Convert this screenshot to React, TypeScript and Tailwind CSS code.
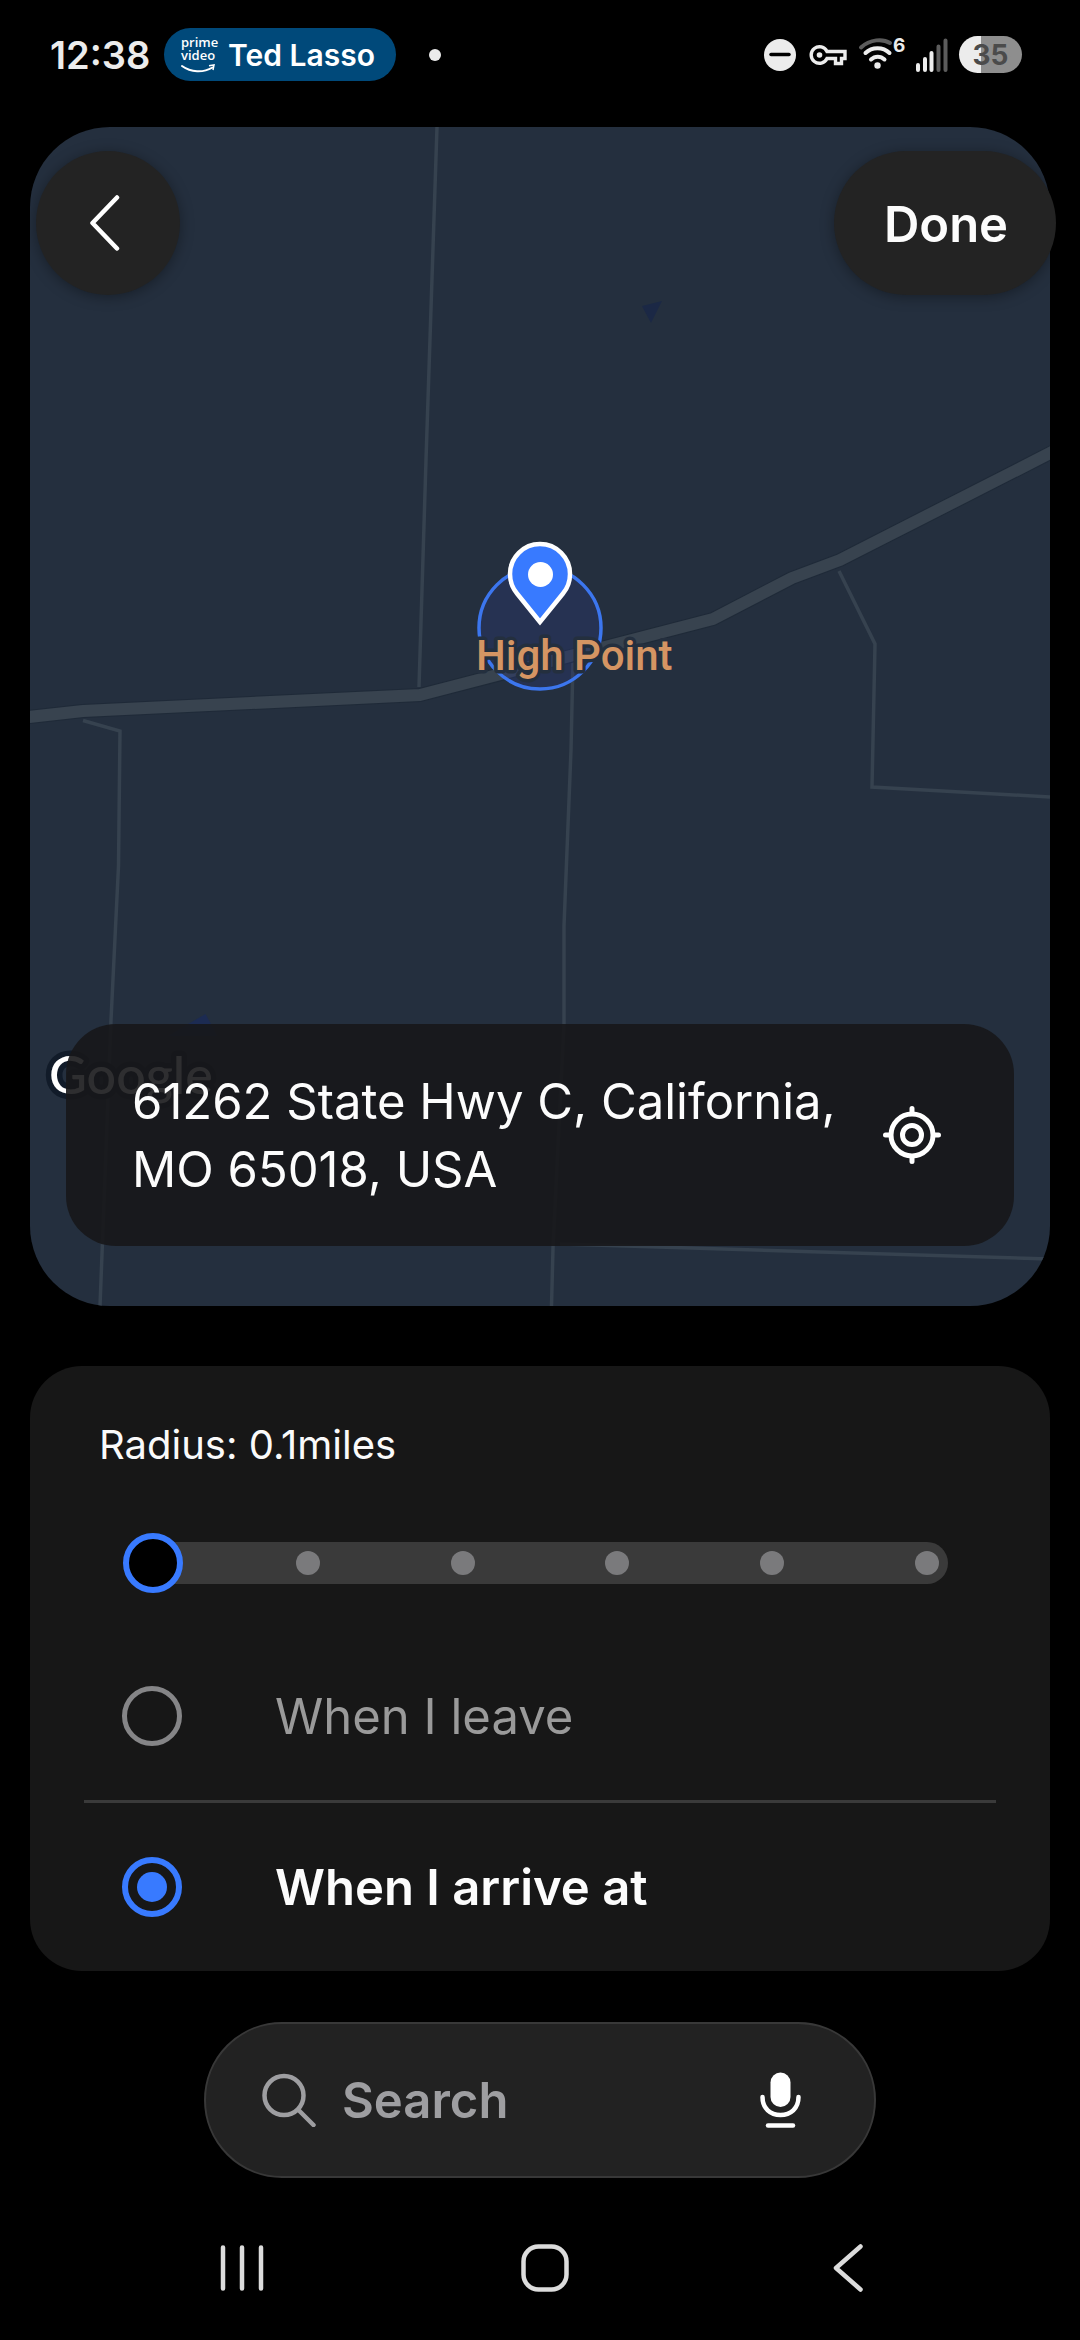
import { useState } from "react";

const RADII = ["0.1", "0.3", "0.5", "1", "3", "5"];

const TRIGGERS = [
  { id: "leave", label: "When I leave" },
  { id: "arrive", label: "When I arrive at" },
];

function StatusBar() {
  return (
    <div className="flex h-[127px] items-center justify-between pr-[58px] pb-[18px] pl-[50px] text-[#ececec]">
      <div className="flex items-center">
        <span className="w-[114px] text-[38px] leading-none font-semibold">12:38</span>
        <div className="flex h-[53px] items-center gap-3 rounded-full bg-[#00497a] pr-[21px] pl-[17px] text-white">
          <div className="flex w-[35px] flex-col font-['Open_Sans'] text-[13px] leading-[13px] font-semibold">
            <span>prime</span>
            <span>video</span>
            <svg className="mt-[2px] h-[9px] w-[35px]" viewBox="0 0 35 9" fill="none" stroke="currentColor">
              <path d="M1 2C10 8.500 22 9 31.500 3.500" strokeWidth="2" strokeLinecap="round" />
              <path d="M28 1.700l5-.7-1 5" strokeWidth="1.500" />
            </svg>
          </div>
          <span className="text-[30px] leading-none font-semibold">Ted Lasso</span>
        </div>
        <span className="ml-[33px] size-3 rounded-full bg-[#ececec]" />
      </div>

      <div className="flex items-center">
        {/* do not disturb */}
        <svg className="size-8" viewBox="0 0 32 32">
          <circle cx="16" cy="16" r="16" fill="#ececec" />
          <path d="M7 15.500h18" stroke="#000" strokeWidth="3.500" strokeLinecap="round" />
        </svg>
        {/* vpn key */}
        <svg className="ml-[13px] h-[22px] w-[38px]" viewBox="0 0 38 22" fill="none" stroke="#ececec">
          <path
            d="M18 7.500H36V14.500H32.500V19.500H26.500V14.500H18A8.300 8.300 0 1 1 18 7.500z"
            strokeWidth="3.400"
            strokeLinejoin="miter"
          />
          <circle cx="10.500" cy="11" r="2.800" fill="#ececec" stroke="none" />
        </svg>
        {/* wifi 6 */}
        <svg className="ml-[11px] h-11 w-[50px]" viewBox="0 -4 50 44" fill="none" strokeLinecap="round">
          <path d="M3 10.500C12 2 25 1.500 32 6" stroke="#5c5c5c" strokeWidth="4" />
          <path d="M7.500 16C14 9.500 25 9.500 31.500 16" stroke="#ececec" strokeWidth="4" />
          <path d="M13 22.500C17 18.700 22.500 18.700 26.500 22.500" stroke="#ececec" strokeWidth="4" />
          <circle cx="19.500" cy="28.500" r="3.200" fill="#ececec" />
          <text x="35" y="15" fill="#ececec" fontSize="19" fontWeight="700">
            6
          </text>
        </svg>
        {/* signal */}
        <svg className="ml-[8px] h-[34px] w-8" viewBox="0 0 32 34" strokeWidth="4" strokeLinecap="round">
          <path d="M2 27v5M9 21v11M15.500 15v17" stroke="#ececec" />
          <path d="M22.500 8.500V32M29.500 2.500V32" stroke="#5c5c5c" />
        </svg>
        <span className="ml-[11px] flex h-[37px] w-[63px] items-center justify-center rounded-full bg-linear-to-r from-[#ececec] from-35% to-[#8e8e8e] to-35% text-[28px] leading-none font-bold text-[#4b4b4b]">
          35
        </span>
      </div>
    </div>
  );
}

function MapView() {
  return (
    <svg
      className="block h-[1179px] w-full rounded-[80px] bg-[#242f3e]"
      viewBox="30 127 1020 1179"
      preserveAspectRatio="xMidYMid slice"
      fill="none"
    >
      {/* water */}
      <path d="M642 306l20-5-11 22z" fill="#1b2845" />
      <path d="M205.500 1014l12 22h-50z" fill="#1c2b52" />

      {/* minor roads */}
      <g stroke="#36424f" strokeWidth="3.500">
        <path d="M437 127L426 460 419 687" />
        <path d="M83 720.500L120 731 118.500 866 111 1020 100 1306" />
        <path d="M573 660L571 750 564 926V1024L553 1248 551.500 1306" />
        <path d="M839 571L875 644 872 787 1050 797" />
        <path d="M560 1244L1050 1259" />
      </g>

      {/* highway */}
      <path
        d="M20 718L83 711 420 695 713 619 792 578 840 560 1060 448"
        stroke="#1f2a38"
        strokeWidth="14"
        strokeLinejoin="round"
      />
      <path
        d="M20 718L83 711 420 695 713 619 792 578 840 560 1060 448"
        stroke="#38434f"
        strokeWidth="12"
        strokeLinejoin="round"
      />

      {/* geofence */}
      <circle cx="540" cy="628" r="61" fill="#2a3a78" fillOpacity="0.35" stroke="#3c76ee" strokeWidth="3.500" />
      <text
        x="476"
        y="670"
        fontFamily="Roboto"
        fontSize="42"
        fontWeight="500"
        fill="#d59563"
        stroke="#242f3e"
        strokeWidth="7"
        strokeLinejoin="round"
        paintOrder="stroke"
      >
        High Point
      </text>
      <path
        d="M540 622L517 593.500C511.500 587 510 581 510 574A30 30 0 0 1 570 574C570 581 568.500 587 563 593.500z"
        fill="#387aff"
        stroke="#fff"
        strokeWidth="4.500"
      />
      <circle cx="540.500" cy="574.500" r="12.500" fill="#fff" />

      <text
        x="49"
        y="1094"
        fontFamily="Lato"
        fontSize="52"
        fontWeight="500"
        fill="#fff"
        stroke="#111b29"
        strokeWidth="11"
        strokeLinejoin="round"
        paintOrder="stroke"
      >
        Google
      </text>
    </svg>
  );
}

function AddressCard() {
  return (
    <div className="absolute inset-x-[66px] bottom-[60px] flex h-[222px] items-center justify-between rounded-[50px] bg-[#171719]/90 pr-[73px] pl-[66px]">
      <p className="pt-[2px] text-[49px] leading-[68px] text-[#fcfcfc]">
        61262 State Hwy C, California,
        <br />
        MO 65018, USA
      </p>
      <button type="button" aria-label="Current location">
        <svg className="size-[58px]" viewBox="0 0 58 58" fill="none" stroke="#fff" strokeWidth="5" strokeLinecap="round">
          <circle cx="29" cy="29" r="21" />
          <circle cx="29" cy="29" r="9.500" />
          <path d="M29 2.500v5M29 50.500v5M2.500 29h5M50.500 29h5" />
        </svg>
      </button>
    </div>
  );
}

function RadiusSlider({ value, onChange }: { value: number; onChange: (v: number) => void }) {
  return (
    <div className="relative mx-[93px] flex h-[60px] items-center">
      <div className="mx-[9px] flex h-[42px] flex-1 items-center justify-between rounded-full bg-[#3a3a3a] px-[9px]">
        {RADII.map((r) => (
          <span key={r} className="size-6 rounded-full bg-[#7a7a7c]" />
        ))}
      </div>
      <input
        id="radius"
        type="range"
        min={0}
        max={RADII.length - 1}
        value={value}
        onChange={(e) => onChange(Number(e.target.value))}
        className="absolute inset-0 h-[60px] w-full appearance-none bg-transparent [&::-webkit-slider-thumb]:size-[60px] [&::-webkit-slider-thumb]:appearance-none [&::-webkit-slider-thumb]:rounded-full [&::-webkit-slider-thumb]:border-[6px] [&::-webkit-slider-thumb]:border-solid [&::-webkit-slider-thumb]:border-[#387aff] [&::-webkit-slider-thumb]:bg-black"
      />
    </div>
  );
}

function SearchBar() {
  return (
    <div className="mx-[204px] mt-[51px] flex h-[156px] items-center rounded-full border-2 border-[#383838] bg-[#222222] pr-[73px] pl-[56px]">
      <svg className="size-[54px] shrink-0" viewBox="0 0 54 54" fill="none" stroke="#9e9ea1" strokeWidth="4.500" strokeLinecap="round">
        <circle cx="22" cy="22.500" r="19.500" />
        <path d="M36.500 37L51.500 52" />
      </svg>
      <input
        type="text"
        placeholder="Search"
        aria-label="Search"
        className="ml-[26px] h-[68px] min-w-0 flex-1 bg-transparent pt-[2px] text-[49px] font-semibold text-white outline-none placeholder:text-[#9e9ea1]"
      />
      <button type="button" aria-label="Voice search">
        <svg className="h-14 w-[41px]" viewBox="0 0 41 56" fill="none" stroke="#fff" strokeWidth="4.500" strokeLinecap="round">
          <rect x="10.500" y="0.500" width="20" height="34.500" rx="10" fill="#fff" stroke="none" />
          <path d="M2.500 25C2.500 36.500 10.500 43 20.500 43S38.500 36.500 38.500 25" />
          <path d="M8 53.500h25" />
        </svg>
      </button>
    </div>
  );
}

function NavBar() {
  return (
    <nav className="grid grid-cols-3 place-items-center pt-[66px] pr-[80px] pb-12 pl-[90px] text-[#dcdcdc]">
      <button type="button" aria-label="Recents">
        <svg className="size-12" viewBox="0 0 48 48" stroke="currentColor" strokeWidth="4.500" strokeLinecap="round">
          <path d="M5 3.500v41M24 3.500v41M43 3.500v41" />
        </svg>
      </button>
      <button type="button" aria-label="Home">
        <svg className="size-12" viewBox="0 0 48 48" fill="none" stroke="currentColor" strokeWidth="4.500">
          <rect x="2.500" y="2.500" width="43" height="43" rx="15" />
        </svg>
      </button>
      <button type="button" aria-label="Back">
        <svg className="size-12" viewBox="0 0 48 48" fill="none" stroke="currentColor" strokeWidth="4.500" strokeLinecap="round" strokeLinejoin="round">
          <path d="M36.500 2.500L12 24 36.500 45.500" />
        </svg>
      </button>
    </nav>
  );
}

export default function App() {
  const [radius, setRadius] = useState(0);
  const [trigger, setTrigger] = useState("arrive");

  return (
    <div className="min-h-screen bg-black font-['Inter',sans-serif]">
      <StatusBar />

      <section className="relative px-[30px]">
        <MapView />
        {/* floats over the map, Done hangs slightly past its edge */}
        <div className="absolute inset-x-0 top-6 flex justify-between pr-6 pl-9">
          <button
            type="button"
            aria-label="Go back"
            className="flex size-36 items-center justify-center rounded-full bg-[#232323] pr-1.5 shadow-[0_2px_14px_rgba(0,0,0,0.35)]"
          >
            <svg className="h-14 w-8" viewBox="0 0 32 56" fill="none" stroke="#fff" strokeWidth="4.500" strokeLinecap="round" strokeLinejoin="round">
              <path d="M28 2.500L3.500 28 28 53.500" />
            </svg>
          </button>
          <button
            type="button"
            className="h-36 w-[222px] rounded-full bg-[#232323] pt-[2px] pl-[2px] text-[49px] leading-none font-semibold text-[#fcfcfc] shadow-[0_2px_14px_rgba(0,0,0,0.35)]"
          >
            Done
          </button>
        </div>
        <AddressCard />
      </section>

      <section className="mx-[30px] mt-[60px] rounded-[52px] bg-[#171717]">
        <label htmlFor="radius" className="block pt-[49px] pb-[58px] pl-[69px] text-[40px] leading-[60px] text-[#fafafa]">
          Radius: {RADII[radius]}miles
        </label>
        <RadiusSlider value={radius} onChange={setRadius} />
        <div className="mt-[39px]">
          {TRIGGERS.map((t, i) => (
            <div key={t.id}>
              {i > 0 && <hr className="mx-[54px] h-[3px] border-0 bg-[#3a3a3a]" />}
              <label className="flex h-[168px] items-center gap-[93px] pl-[92px]">
                <input
                  type="radio"
                  name="trigger"
                  checked={trigger === t.id}
                  onChange={() => setTrigger(t.id)}
                  className="peer grid size-[60px] appearance-none place-items-center rounded-full border-[5px] border-[#858587] checked:border-[6px] checked:border-[#387aff] checked:before:size-[30px] checked:before:rounded-full checked:before:bg-[#387aff]"
                />
                <span className="pt-[2px] text-[49px] leading-[68px] text-[#9a9a9a] peer-checked:font-semibold peer-checked:text-[#fcfcfc]">
                  {t.label}
                </span>
              </label>
            </div>
          ))}
        </div>
      </section>

      <SearchBar />
      <NavBar />
    </div>
  );
}
